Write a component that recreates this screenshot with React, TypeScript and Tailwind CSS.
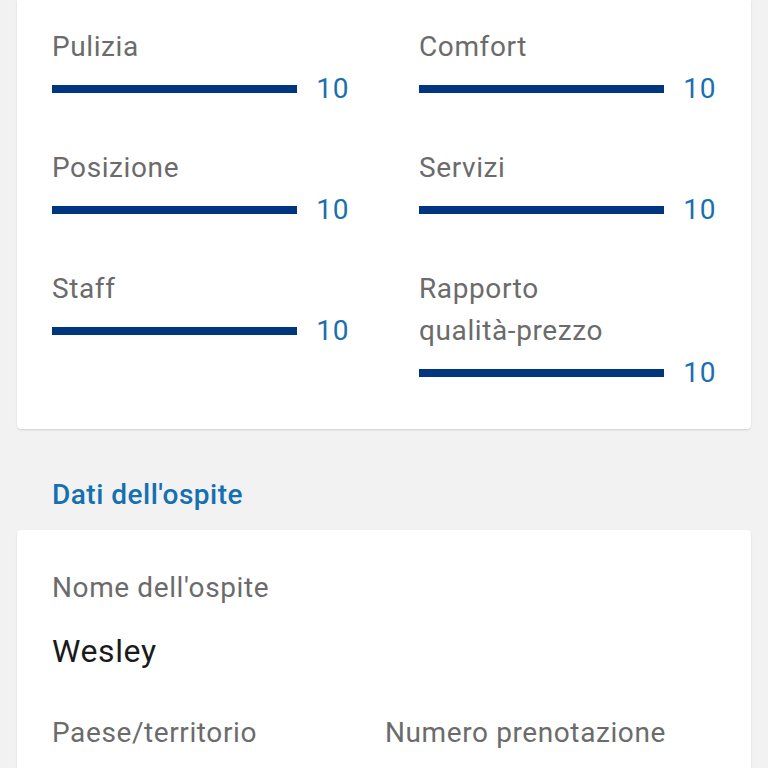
const ratings = [
  { label: 'Pulizia', score: 10 },
  { label: 'Comfort', score: 10 },
  { label: 'Posizione', score: 10 },
  { label: 'Servizi', score: 10 },
  { label: 'Staff', score: 10 },
  { label: 'Rapporto qualità-prezzo', score: 10 },
];

function RatingRow({ label, score }: { label: string; score: number }) {
  return (
    <div className="flex flex-col">
      <div className="max-w-[210px] text-[28px] leading-[42px] tracking-[0.6px] text-[#6b6b6b]">{label}</div>
      <div className="flex h-[42px] items-center">
        <div className="h-[8px] bg-[#003580]" style={{ width: `${(score / 10) * 246}px` }} />
        <span className="ml-[19px] text-[28px] leading-none tracking-[0.6px] text-[#1a6fb0]">{score}</span>
      </div>
    </div>
  );
}

export default function App() {
  return (
    <div
      className="min-h-[768px] w-[768px] overflow-hidden bg-[#f2f2f2]"
      style={{ fontFamily: 'Roboto, "Noto Sans", sans-serif' }}
    >
      {/* Scores card */}
      <div className="mx-[17px] rounded-b-[4px] bg-white px-[35px] pb-[35px] pt-[26px] shadow-[0_1px_2px_rgba(0,0,0,0.15)]">
        <div className="grid grid-cols-[297px_297px] gap-x-[70px] gap-y-[37px]">
          {ratings.map((r) => (
            <RatingRow key={r.label} label={r.label} score={r.score} />
          ))}
        </div>
      </div>

      <h2 className="mt-[45px] px-[52px] text-[28px] font-medium leading-[42px] tracking-[0.5px] text-[#1470b1]">
        Dati dell'ospite
      </h2>

      {/* Guest card */}
      <div className="mx-[17px] mt-[14px] rounded-[4px] bg-white px-[35px] pb-[35px] pt-[37px] shadow-[0_1px_2px_rgba(0,0,0,0.15)]">
        <div className="text-[28px] leading-[42px] tracking-[0.6px] text-[#6b6b6b]">Nome dell'ospite</div>
        <div className="mt-[21px] text-[32px] leading-[42px] tracking-[0.6px] text-[#1a1a1a]">Wesley</div>
        <div className="mt-[40px] grid grid-cols-[333px_1fr]">
          <div className="text-[28px] leading-[42px] tracking-[0.6px] text-[#6b6b6b]">Paese/territorio</div>
          <div className="text-[28px] leading-[42px] tracking-[0.6px] text-[#6b6b6b]">Numero prenotazione</div>
        </div>
        <div className="h-[60px]" />
      </div>
    </div>
  );
}
